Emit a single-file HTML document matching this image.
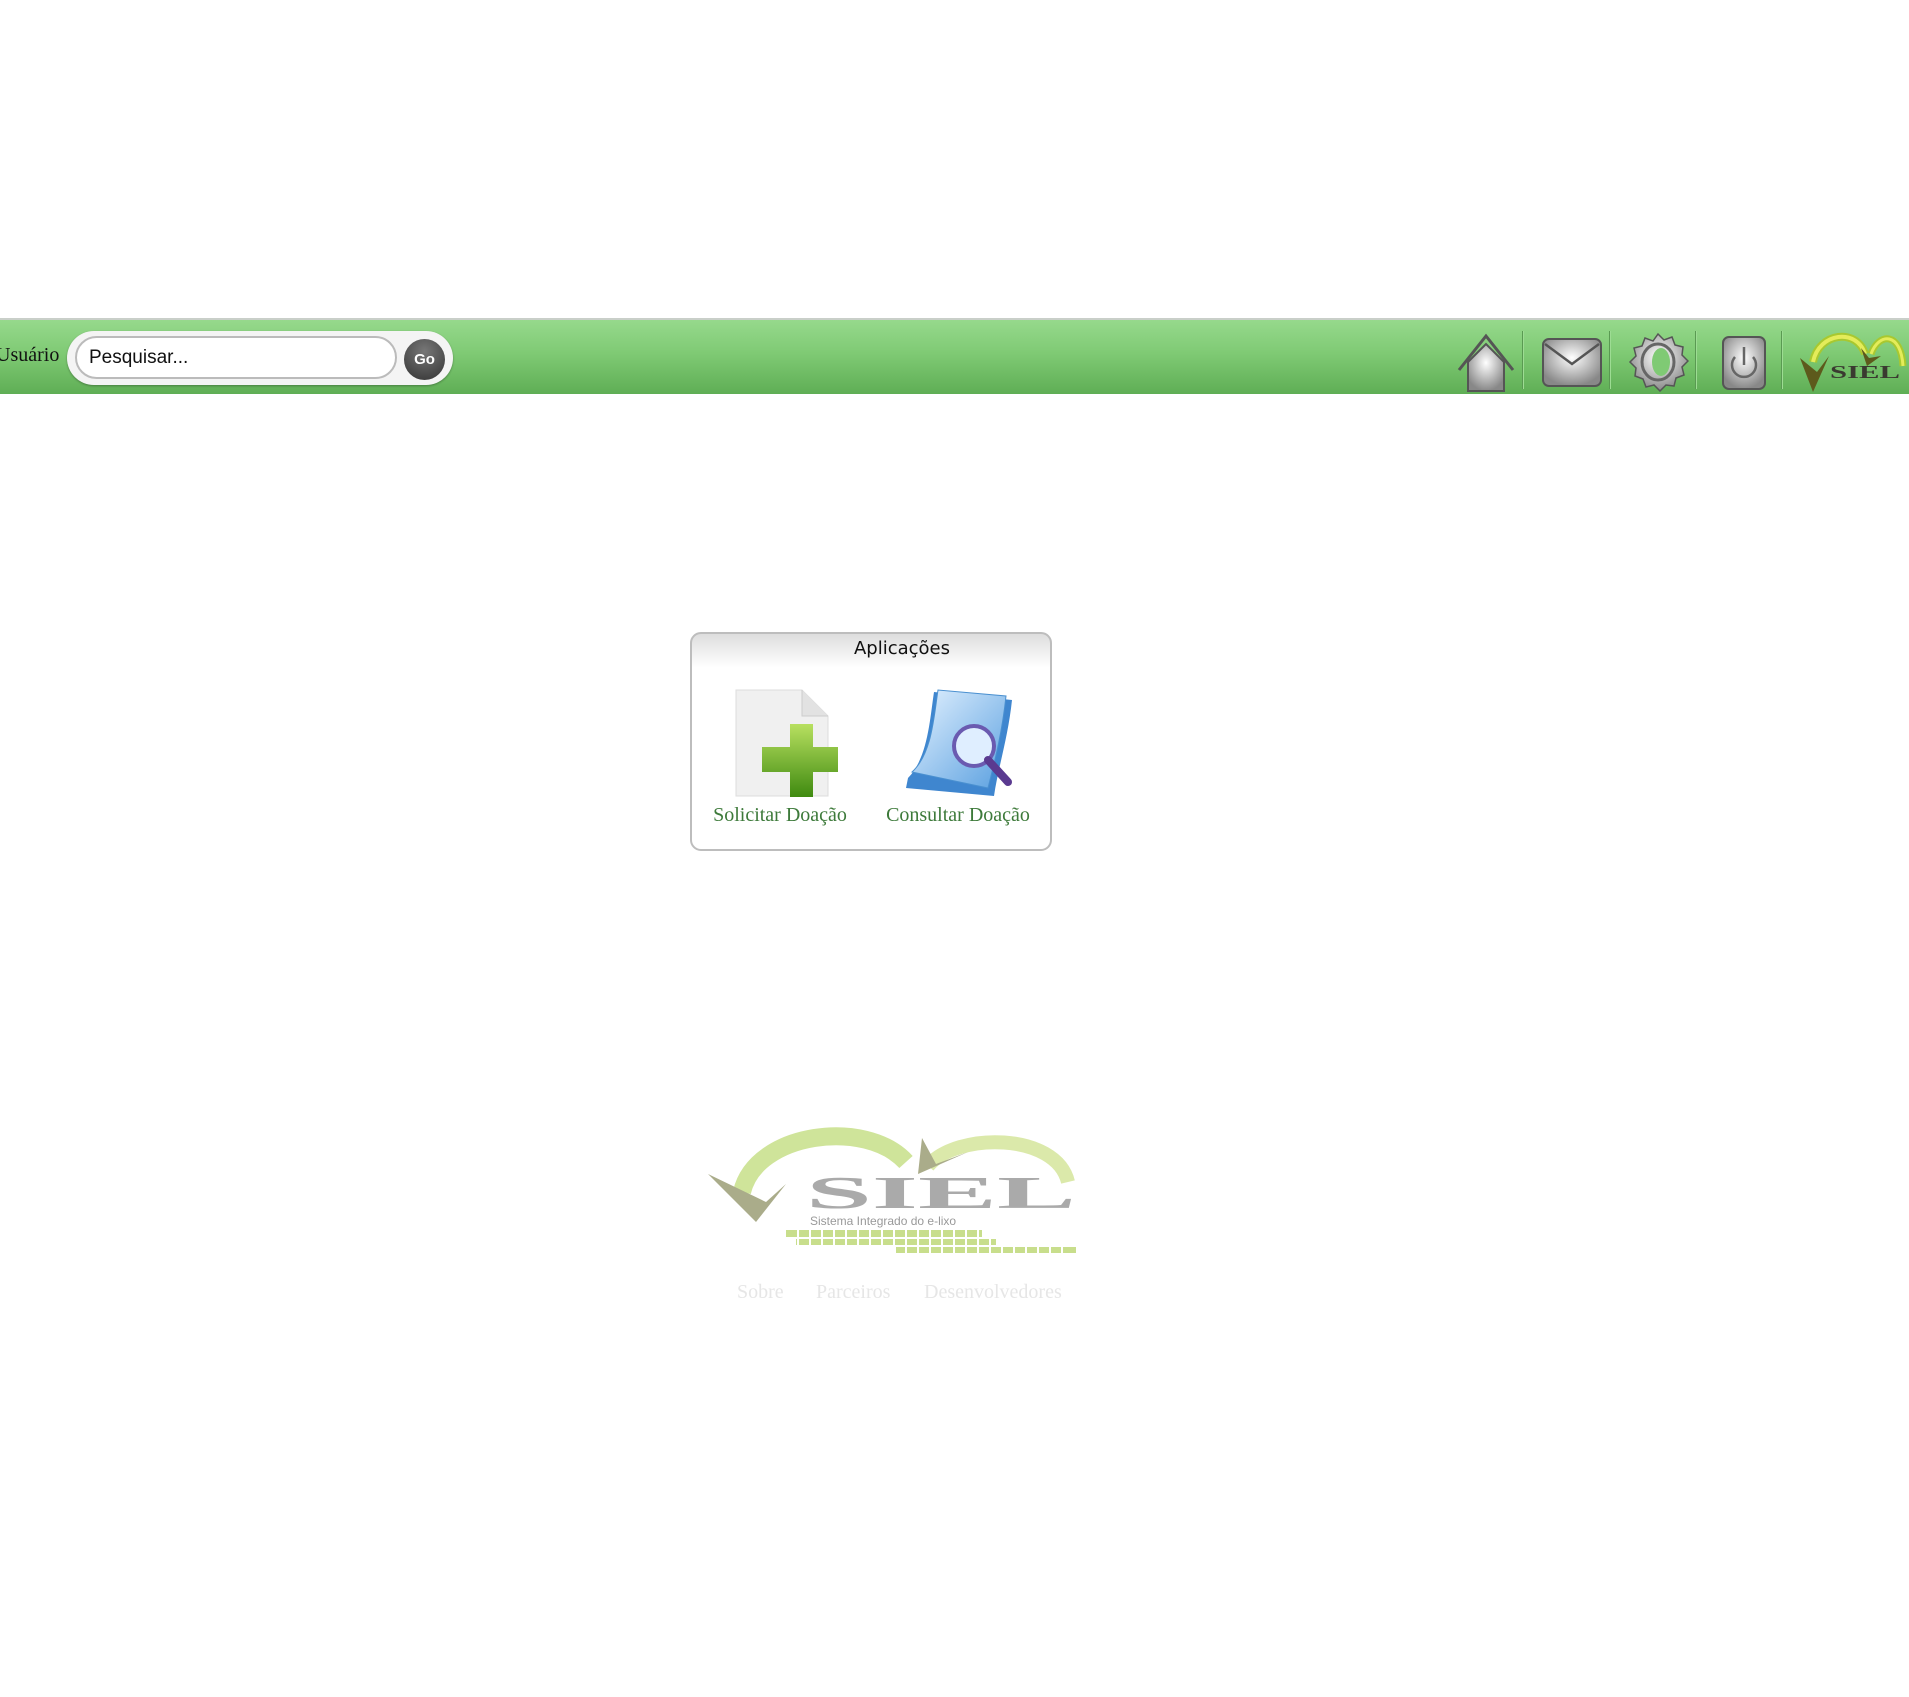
<!DOCTYPE html>
<html><head><meta charset="utf-8"><style>
html,body{margin:0;padding:0;background:#fff;width:1909px;height:1697px;overflow:hidden;position:relative;font-family:"Liberation Serif",serif}
.abs{position:absolute}
#bar{left:0;top:318px;width:1909px;height:76px;border-top:2px solid #c9cfc9;box-sizing:border-box;background:linear-gradient(#96d98c 0%,#7fca74 45%,#5fae55 100%)}
.sep{position:absolute;top:331px;width:1px;height:58px;background:#5a9a52;box-shadow:1px 0 0 #9ddc93}
</style></head><body>
<div id="bar" class="abs"></div>
<div class="abs" style="left:-4px;top:344px;font-size:20px;color:#111">Usuário</div>
<div class="abs" style="left:67px;top:331px;width:386px;height:54px;border-radius:27px;background:#f4f4f4;box-shadow:0 1px 2px rgba(0,0,0,.3)"></div>
<div class="abs" style="left:75px;top:336px;width:322px;height:43px;border-radius:22px;background:#fff;border:2px solid #bbb;box-sizing:border-box;font-family:'Liberation Sans',sans-serif;font-size:19px;line-height:39px;padding-left:12px;color:#111">Pesquisar...</div>
<div class="abs" style="left:404px;top:339px;width:41px;height:41px;border-radius:50%;background:radial-gradient(circle at 50% 30%,#777,#333);color:#fff;font-family:'Liberation Sans',sans-serif;font-weight:bold;font-size:15px;line-height:41px;text-align:center">Go</div>

<div class="sep" style="left:1522px"></div>
<div class="sep" style="left:1609px"></div>
<div class="sep" style="left:1695px"></div>
<div class="sep" style="left:1781px"></div>

<svg class="abs" style="left:1455px;top:330px" width="62" height="64" viewBox="0 0 62 64">
<defs><radialGradient id="g1" cx="50%" cy="40%" r="60%"><stop offset="0" stop-color="#fff"/><stop offset="1" stop-color="#888"/></radialGradient></defs>
<path d="M13 32 L31 14 L49 32 L49 61 L13 61 Z" fill="url(#g1)" stroke="#555" stroke-width="2"/>
<path d="M4 40 L31 6 L58 40" fill="none" stroke="#555" stroke-width="3"/>
</svg>
<svg class="abs" style="left:1540px;top:336px" width="64" height="54" viewBox="0 0 64 54">
<rect x="3" y="3" width="58" height="47" rx="6" fill="url(#g1)" stroke="#555" stroke-width="2"/>
<path d="M5 8 L32 28 L59 8" fill="none" stroke="#555" stroke-width="2.5"/>
</svg>
<svg class="abs" style="left:1627px;top:332px" width="62" height="60" viewBox="0 0 62 60">
<path d="M31 2 l6 6 8-3 3 8 8 2-1 8 6 6-6 6 2 8-8 3-2 8-8-1-6 6-6-6-8 2-3-8-8-3 1-8-6-6 6-6-2-8 8-2 3-8 8 3z" fill="url(#g1)" stroke="#555" stroke-width="1.5"/>
<ellipse cx="31" cy="30" rx="16" ry="18" fill="none" stroke="#666" stroke-width="3"/>
<ellipse cx="34" cy="30" rx="9" ry="14" fill="#7fca74"/>
</svg>
<svg class="abs" style="left:1721px;top:335px" width="46" height="56" viewBox="0 0 46 56">
<rect x="2" y="2" width="42" height="52" rx="6" fill="url(#g1)" stroke="#555" stroke-width="2"/>
<path d="M14 22 A12 12 0 1 0 32 22" fill="none" stroke="#666" stroke-width="2.5"/>
<line x1="23" y1="12" x2="23" y2="30" stroke="#666" stroke-width="2.5"/>
</svg>
<svg class="abs" style="left:1797px;top:328px" width="112" height="66" viewBox="0 0 112 66">
<path d="M16 34 C22 4 60 0 68 26" fill="none" stroke="#a8c830" stroke-width="8"/>
<path d="M16 34 C22 4 60 0 68 26" fill="none" stroke="#e4ec5a" stroke-width="4"/>
<path d="M74 26 C82 4 104 4 106 38" fill="none" stroke="#a8c830" stroke-width="7"/>
<path d="M74 26 C82 4 104 4 106 38" fill="none" stroke="#e4ec5a" stroke-width="3"/>
<path d="M3 30 L16 64 L32 28 L20 44 Z" fill="#5d5a1c"/>
<path d="M64 20 L70 38 L84 28 L72 30 Z" fill="#5d5a1c"/>
<text x="33" y="50" font-family="Liberation Serif,serif" font-weight="bold" font-size="18" fill="#3a3a30" textLength="70" lengthAdjust="spacingAndGlyphs">SIEL</text>
</svg>

<div class="abs" style="left:690px;top:632px;width:362px;height:219px;border:2px solid #bdbdbd;border-radius:11px;box-sizing:border-box;background:linear-gradient(#ddd 0px,#fff 34px)"></div>
<div class="abs" style="left:690px;top:638px;width:424px;text-align:center;font-family:'DejaVu Sans',sans-serif;font-size:18px;color:#111">Aplicações</div>

<svg class="abs" style="left:734px;top:688px" width="106" height="112" viewBox="0 0 106 112">
<path d="M2 2 L68 2 L94 28 L94 108 L2 108 Z" fill="#f0f0f0" stroke="#ddd"/>
<path d="M68 2 L68 28 L94 28" fill="#e2e2e2" stroke="#ccc"/>
<defs><linearGradient id="gp" x1="0" y1="0" x2="0" y2="1"><stop offset="0" stop-color="#b8e060"/><stop offset="1" stop-color="#3f8a10"/></linearGradient></defs>
<path d="M56 36 L79 36 L79 59 L104 59 L104 84 L79 84 L79 109 L56 109 L56 84 L28 84 L28 59 L56 59 Z" fill="url(#gp)"/>
</svg>
<svg class="abs" style="left:898px;top:688px" width="120" height="112" viewBox="0 0 120 112">
<defs><linearGradient id="bp" x1="0" y1="0" x2="1" y2="1"><stop offset="0" stop-color="#e4f2ff"/><stop offset="1" stop-color="#5aa0e0"/></linearGradient></defs>
<path d="M10 90 C30 70 32 30 36 4 L114 12 C110 50 100 80 96 108 L8 100 Z" fill="#3f86cf"/>
<path d="M14 84 C34 66 36 28 40 2 L108 8 C104 46 96 76 90 100 Z" fill="url(#bp)" stroke="#4a90d0"/>
<circle cx="76" cy="58" r="20" fill="#dfeeff" stroke="#6a5ab0" stroke-width="4"/>
<line x1="90" y1="72" x2="110" y2="94" stroke="#5a3a90" stroke-width="8" stroke-linecap="round"/>
</svg>
<div class="abs" style="left:695px;top:804px;width:170px;text-align:center;font-size:20px;color:#3d7a3a">Solicitar Doação</div>
<div class="abs" style="left:868px;top:804px;width:180px;text-align:center;font-size:20px;color:#3d7a3a">Consultar Doação</div>

<svg class="abs" style="left:706px;top:1122px" width="376" height="136" viewBox="0 0 376 136">
<path d="M36 70 C50 10 160 -4 200 40" fill="none" stroke="#cfe49a" stroke-width="18"/>
<path d="M222 44 C250 10 350 10 362 60" fill="none" stroke="#dbe9aa" stroke-width="14"/>
<path d="M2 52 L50 100 L80 62 L60 80 Z" fill="#aaac8a"/>
<path d="M216 16 L212 52 L262 30 L230 42 Z" fill="#aaac8a"/>
<text x="100" y="86" font-family="Liberation Serif,serif" font-weight="bold" font-size="46" fill="#aaa" textLength="270" lengthAdjust="spacingAndGlyphs">SIEL</text>
<text x="104" y="103" font-family="Liberation Sans,sans-serif" font-size="12" fill="#999">Sistema Integrado do e-lixo</text>
<rect x="80" y="108" width="196" height="7" fill="#c8de8c"/>
<rect x="90" y="117" width="200" height="6" fill="#c8de8c"/>
<rect x="190" y="125" width="180" height="6" fill="#c8de8c"/>
<g stroke="#fff" stroke-width="2">
<path d="M92 106v26M104 106v26M116 106v26M128 106v26M140 106v26M152 106v26M164 106v26M176 106v26M188 106v26M200 106v26M212 106v26M224 106v26M236 106v26M248 106v26M260 106v26M272 106v26M284 106v26M296 106v26M308 106v26M320 106v26M332 106v26M344 106v26M356 106v26"/>
</g>
</svg>
<div class="abs" style="left:737px;top:1281px;font-size:20px;color:#e6e6e6">Sobre</div>
<div class="abs" style="left:816px;top:1281px;font-size:20px;color:#e6e6e6">Parceiros</div>
<div class="abs" style="left:924px;top:1281px;font-size:20px;color:#e6e6e6">Desenvolvedores</div>
</body></html>
